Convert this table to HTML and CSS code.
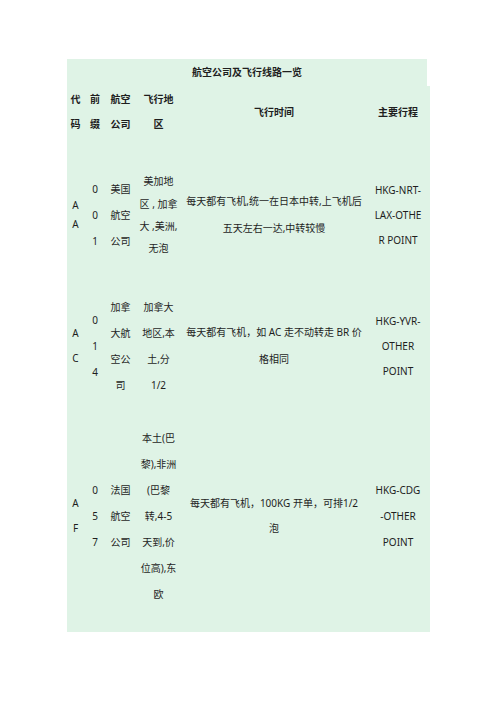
FILE: index.html
```html
<!DOCTYPE html>
<html lang="zh-CN">
<head>
<meta charset="utf-8">
<title>航空公司及飞行线路一览</title>
<link rel="stylesheet" href="styles.css">
</head>
<body>
<div class="page">
  <div class="title">航空公司及飞行线路一览</div>
  <table class="grid">
    <colgroup>
      <col class="c1"><col class="c2"><col class="c3"><col class="c4"><col class="c5"><col class="c6">
    </colgroup>
    <tr class="head">
      <th>代<br>码</th>
      <th>前<br>缀</th>
      <th>航空<br>公司</th>
      <th>飞行地<br>区</th>
      <th>飞行时间</th>
      <th>主要行程</th>
    </tr>
    <tr class="r1">
      <td class="lh20">A<br>A</td>
      <td class="lh26">0<br>0<br>1</td>
      <td class="lh26">美国<br>航空<br>公司</td>
      <td class="lh22">美加地<br>区 , 加拿<br>大 ,美洲,<br>无泡</td>
      <td class="lh27">每天都有飞机,统一在日本中转,上飞机后<br>五天左右一达,中转较慢</td>
      <td class="lh25">HKG-NRT-<br>LAX-OTHE<br>R POINT</td>
    </tr>
    <tr class="r2">
      <td class="lh25">A<br>C</td>
      <td class="lh26">0<br>1<br>4</td>
      <td class="lh26">加拿<br>大航<br>空公<br>司</td>
      <td class="lh26">加拿大<br>地区,本<br>土,分<br>1/2</td>
      <td class="lh27">每天都有飞机，如 AC 走不动转走 BR 价<br>格相同</td>
      <td class="lh25">HKG-YVR-<br>OTHER<br>POINT</td>
    </tr>
    <tr class="r3">
      <td class="lh25">A<br>F</td>
      <td class="lh26">0<br>5<br>7</td>
      <td class="lh26">法国<br>航空<br>公司</td>
      <td class="lh26">本土(巴<br>黎),非洲<br>(巴黎<br>转,4-5<br>天到,价<br>位高),东<br>欧</td>
      <td class="lh25">每天都有飞机，100KG 开单，可排1/2<br>泡</td>
      <td class="lh26">HKG-CDG<br>-OTHER<br>POINT</td>
    </tr>
  </table>
</div>
</body>
</html>
```

FILE: styles.css
```css
html, body {
  margin: 0;
  padding: 0;
  background: #ffffff;
}

body {
  font-family: "Noto Sans", "Noto Sans CJK SC", sans-serif;
  font-size: 10px;
  color: #1e1e1e;
}

.page {
  padding: 59px 0 0 67px;
}

.title {
  width: 360px;
  height: 27px;
  line-height: 27px;
  text-align: center;
  background: #dff3e6;
  font-weight: bold;
}

.grid {
  width: 363px;
  table-layout: fixed;
  border-collapse: collapse;
  border-spacing: 0;
  background: #dff3e6;
}

.c1 { width: 17px; }
.c2 { width: 22px; }
.c3 { width: 29px; }
.c4 { width: 47px; }
.c5 { width: 184px; }
.c6 { width: 64px; }

.grid th,
.grid td {
  padding: 0;
  text-align: center;
  vertical-align: middle;
  white-space: nowrap;
}

.grid th {
  line-height: 25px;
  font-weight: bold;
}

.head { height: 52px; }
.r1 { height: 154px; }
.r2 { height: 108px; }
.r3 { height: 232px; }

.lh20 { line-height: 19.5px; }
.lh22 { line-height: 22.3px; }
.lh25 { line-height: 25px; }
.lh26 { line-height: 26px; }
.lh27 { line-height: 27px; }
```
